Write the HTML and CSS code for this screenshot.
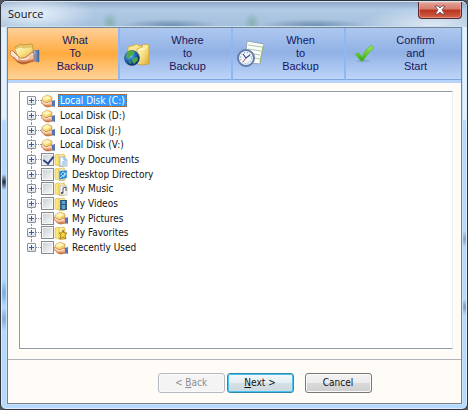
FILE: index.html
```html
<!DOCTYPE html>
<html lang="en">
<head>
<meta charset="utf-8">
<title>Source</title>
<link rel="stylesheet" href="styles.css">
</head>
<body>
<svg class="defs" aria-hidden="true">
  <defs>
    <linearGradient id="gold" x1="0" y1="0" x2="1" y2="1"><stop offset="0" stop-color="#fffbd0"/><stop offset=".5" stop-color="#f8df80"/><stop offset="1" stop-color="#dca733"/></linearGradient>
    <linearGradient id="skin" x1="0" y1="0" x2="0" y2="1"><stop offset="0" stop-color="#ffe4cd"/><stop offset=".6" stop-color="#f5b58c"/><stop offset="1" stop-color="#b8632f"/></linearGradient>
    <linearGradient id="cuff" x1="0" y1="0" x2="1" y2="0"><stop offset="0" stop-color="#e4eefb"/><stop offset=".4" stop-color="#7e9bcb"/><stop offset="1" stop-color="#3e5c94"/></linearGradient>
    <radialGradient id="sea" cx=".35" cy=".3" r=".75"><stop offset="0" stop-color="#8fd4f8"/><stop offset=".45" stop-color="#2472c4"/><stop offset="1" stop-color="#0a2467"/></radialGradient>
    <linearGradient id="leaf" x1="0" y1="0" x2="0" y2="1"><stop offset="0" stop-color="#a4e860"/><stop offset="1" stop-color="#32ac10"/></linearGradient>
  </defs>
  <symbol id="hand" viewBox="0 0 30 24">
    <path d="M5 5l6-3 2 1 9-1 2 9-16 4z" fill="#e9c667" stroke="#b88d38" stroke-width=".7"/>
    <path d="M5 7l6-2 2 1 9-1 1 8-14 4z" fill="url(#gold)" stroke="#d9b660" stroke-width=".6"/>
    <path d="M0 10c1-2 3-1 4 0l5 5c2 2 5 1 7 0l5-4 3-1v9c-5 1-7 3-12 3-4-1-7-4-9-7-2-1-3-3-3-5z" fill="url(#skin)" stroke="#ae6038" stroke-width=".8"/>
    <path d="M2 10l6 6M1 12l7 6M10 17c4 1 7 0 9-2" fill="none" stroke="#fff4e8" stroke-width="1.1"/>
    <path d="M4 15c3 4 6 6 9 6 4 0 6-2 10-3" fill="none" stroke="#a84e22" stroke-width=".7"/>
    <path d="M23 9l6-1v12l-5-1c2-3 0-7-1-10z" fill="url(#cuff)" stroke="#597095" stroke-width=".6"/>
  </symbol>
  <symbol id="minihand" viewBox="0 0 14 14">
    <path d="M1 4l5-3 5 2v5l-4 2-5-3z" fill="url(#gold)" stroke="#cf9546" stroke-width=".6"/>
    <path d="M2 4l4-2 4 2-4 2z" fill="#fff4ba"/>
    <path d="M0 6l5 3 6-2 1 5-5 1c-3 0-5-2-7-5z" fill="url(#skin)" stroke="#ba6b36" stroke-width=".7"/>
    <path d="M1 7l4 3 5-2" fill="none" stroke="#fff1d6" stroke-width=".9"/>
    <path d="M11 7l3-1v7l-3-1z" fill="#5775b5"/>
  </symbol>
  <symbol id="folder" viewBox="0 0 14 14">
    <path d="M1 2l3-1 2 1v11l-5-1z" fill="#fbe778" stroke="#dcb64b" stroke-width=".6"/>
    <path d="M5 2l5-1 1 2v10l-5 1-1-1z" fill="url(#gold)" stroke="#d4ab42" stroke-width=".6"/>
  </symbol>
  <symbol id="docs" viewBox="0 0 14 14"><use href="#folder"/><path d="M6 4h4l3 3v6H6z" fill="#f4faff" stroke="#7ea6cd" stroke-width=".7"/><path d="M10 4v3h3M8 9h4M8 11h4" fill="none" stroke="#5b97d1" stroke-width=".8"/></symbol>
  <symbol id="desktop" viewBox="0 0 14 14"><use href="#folder"/><path d="M5 4l8-1v8l-8 2z" fill="#1f82d0" stroke="#bddcf4" stroke-width=".7"/><path d="M7 8c0-4 5-3 4 0-1 3-3 1-2 0M6 11l6-5" fill="none" stroke="#d4f1ff"/></symbol>
  <symbol id="music" viewBox="0 0 14 14"><use href="#folder"/><path d="M6 4h7v9H6z" fill="#f3f4f5" stroke="#b2b6bc" stroke-width=".6"/><path d="M9 11V6l3-1v4" fill="none" stroke="#333" stroke-width=".8"/><circle cx="8" cy="11" r="1" fill="#333"/></symbol>
  <symbol id="video" viewBox="0 0 14 14"><use href="#folder"/><path d="M6 3h7v10H6z" fill="#34516f"/><path d="M8 4h3v3H8zM8 8h3v4H8z" fill="#59a6d4"/><path d="M7 4v9M12 4v9" stroke="#9bb1c3" stroke-width=".6" stroke-dasharray="1 1"/></symbol>
  <symbol id="star" viewBox="0 0 14 14"><use href="#folder"/><path d="M9 4l1 3h3l-2 2 1 4-3-2-3 2 1-4-2-2h3z" fill="#ffd735" stroke="#8c6c18" stroke-width=".8"/></symbol>
  <symbol id="globe" viewBox="0 0 28 28">
    <path d="M4 7l9-3 2 2 3-1v18l-14 2z" fill="#f8e58f" stroke="#c99d37" stroke-width=".7"/>
    <path d="M13 9l5-2 1-3 6 1v19l-7 1-5-1z" fill="url(#gold)" stroke="#c69a38" stroke-width=".7"/>
    <path d="M14 10l6-1 4-4" fill="none" stroke="#fffbd4"/>
    <circle cx="8" cy="18" r="7.5" fill="url(#sea)" stroke="#204582" stroke-width=".6"/>
    <path d="M3 13c2-3 5-3 8-1l-2 3-3 1-1 3-3-2zM9 18l4-1 1 3-4 4-2-3zM4 21l3 1v2z" fill="#4caa43"/>
  </symbol>
  <symbol id="clock" viewBox="0 0 28 28">
    <path d="M10 1l17 3-4 20-15-2z" fill="#f9fcf5" stroke="#8c9ba6" stroke-width=".8"/>
    <path d="M11 5l14 2M11 9l13 2M11 13l12 2M13 17l10 2" stroke="#9db4a6" stroke-width=".8"/><path d="M23 22l3-16" stroke="#9bbc6e"/>
    <circle cx="9" cy="18" r="8" fill="#f0f5fc" stroke="#637ba9" stroke-width="2"/>
    <circle cx="9" cy="18" r="5.5" fill="none" stroke="#7788a8" stroke-dasharray="1 1.9"/>
    <path d="M6 14l3 4 4-3" fill="none" stroke="#354b7a" stroke-width="1.1"/><path d="M9 18l-3 4" stroke="#d04e4e"/>
  </symbol>
  <symbol id="tick" viewBox="0 0 20 20"><ellipse cx="9" cy="17" rx="7" ry="1.5" fill="#6284b0" opacity=".3"/><path d="M1 10l4-1 3 4c2-5 5-9 10-12l1 4c-4 3-7 7-10 12H7z" fill="url(#leaf)" stroke="#51b82b" stroke-width=".6"/></symbol>
</svg>
<main class="window">
  <header class="titlebar">
    <h1>Source</h1>
    <button class="close" type="button" aria-label="Close"><svg viewBox="0 0 12 10"><path d="M1 1h3l2 2 2-2h3L8 5l3 4H8L6 7 4 9H1l3-4z" fill="#fff" stroke="#68394a" stroke-width=".8"/></svg></button>
  </header>
  <div class="client">
    <nav class="steps" aria-label="Backup steps">
      <button class="step current" type="button" aria-current="step"><svg class="art-hand"><use href="#hand"/></svg><span>What<br>To<br>Backup</span></button>
      <button class="step" type="button"><svg class="art"><use href="#globe"/></svg><span>Where<br>to<br>Backup</span></button>
      <button class="step" type="button"><svg class="art"><use href="#clock"/></svg><span>When<br>to<br>Backup</span></button>
      <button class="step" type="button"><svg class="art-tick"><use href="#tick"/></svg><span>Confirm<br>and<br>Start</span></button>
    </nav>
    <section class="content">
      <ul class="tree">
        <li><button class="expand" type="button" aria-label="Expand C"></button><svg class="icon"><use href="#minihand"/></svg><span class="name selected">Local Disk (C:)</span></li>
        <li><button class="expand" type="button" aria-label="Expand D"></button><svg class="icon"><use href="#minihand"/></svg><span class="name">Local Disk (D:)</span></li>
        <li><button class="expand" type="button" aria-label="Expand J"></button><svg class="icon"><use href="#minihand"/></svg><span class="name">Local Disk (J:)</span></li>
        <li><button class="expand" type="button" aria-label="Expand V"></button><svg class="icon"><use href="#minihand"/></svg><span class="name">Local Disk (V:)</span></li>
        <li><button class="expand" type="button" aria-label="Expand My Documents"></button><input type="checkbox" id="c1" checked><svg class="icon"><use href="#docs"/></svg><label class="name" for="c1">My Documents</label></li>
        <li><button class="expand" type="button" aria-label="Expand Desktop Directory"></button><input type="checkbox" id="c2"><svg class="icon"><use href="#desktop"/></svg><label class="name" for="c2">Desktop Directory</label></li>
        <li><button class="expand" type="button" aria-label="Expand My Music"></button><input type="checkbox" id="c3"><svg class="icon"><use href="#music"/></svg><label class="name" for="c3">My Music</label></li>
        <li><button class="expand" type="button" aria-label="Expand My Videos"></button><input type="checkbox" id="c4"><svg class="icon"><use href="#video"/></svg><label class="name" for="c4">My Videos</label></li>
        <li><button class="expand" type="button" aria-label="Expand My Pictures"></button><input type="checkbox" id="c5"><svg class="icon"><use href="#minihand"/></svg><label class="name" for="c5">My Pictures</label></li>
        <li><button class="expand" type="button" aria-label="Expand My Favorites"></button><input type="checkbox" id="c6"><svg class="icon"><use href="#star"/></svg><label class="name" for="c6">My Favorites</label></li>
        <li><button class="expand" type="button" aria-label="Expand Recently Used"></button><input type="checkbox" id="c7"><svg class="icon"><use href="#minihand"/></svg><label class="name" for="c7">Recently Used</label></li>
      </ul>
    </section>
    <footer class="actions">
      <button class="btn" type="button" disabled>&lt; <u>B</u>ack</button>
      <button class="btn primary" type="button"><u>N</u>ext &gt;</button>
      <button class="btn cancel" type="button">Cancel</button>
    </footer>
  </div>
</main>
</body>
</html>
```
FILE: styles.css
```css
* { box-sizing: border-box; }
body { margin: 0; background: #53575d; font-family: "DejaVu Sans Condensed", "DejaVu Sans", sans-serif; font-size: 10px; color: #111; }
button { font: inherit; color: inherit; margin: 0; padding: 0; }
.defs { position: absolute; width: 0; height: 0; }

.window {
  display: flex; flex-direction: column; min-height: 100vh;
  padding: 0 5px 5px 6px; border: 1px solid #30343d; border-radius: 7px 7px 6px 6px;
  box-shadow: inset 0 0 0 1px #dcecfb;
  background:
    radial-gradient(ellipse 5px 8px at 3px 181px, #182336, transparent),
    radial-gradient(ellipse 6px 14px at 3px 292px, #79a9dc, transparent),
    radial-gradient(ellipse 6px 12px at 3px 318px, #86a7cf, transparent),
    radial-gradient(ellipse 5px 8px at 464px 238px, #829ebd, transparent),
    radial-gradient(ellipse 5px 8px at 464px 306px, #7895b9, transparent),
    linear-gradient(#e3effb 0 118px, #b5daff 120px);
}
.titlebar {
  display: flex; justify-content: space-between; align-items: flex-start;
  height: 26px; margin: 0 -5px 0 -6px; padding: 0 5px 0 7px; border-radius: 6px 6px 0 0;
  border-top: 1px solid #d7e6f3;
  background:
    radial-gradient(ellipse 8px 11px at 109px 21px, #75aa9caa, transparent),
    radial-gradient(ellipse 8px 11px at 251px 21px, #75aa9caa, transparent),
    radial-gradient(ellipse 48px 6px at 169px 23px, #587b9daa, transparent),
    radial-gradient(ellipse 52px 6px at 312px 23px, #587b9daa, transparent),
    radial-gradient(ellipse 60px 20px at 34px 12px, #e6f0f9, transparent),
    radial-gradient(ellipse 70px 20px at 430px 24px, #dfeaf4, transparent),
    linear-gradient(#91a9c7, #b0cae5 30%, #a4bfdb);
}
.titlebar h1 { margin: 0; padding-top: 4px; font: 11px/16px "Open Sans", sans-serif; color: #111; }
.close {
  display: grid; place-items: center; width: 44px; height: 17px;
  border: 1px solid #5b2733; border-top: 0; border-radius: 0 0 4px 4px;
  background: linear-gradient(#e5a59a, #d3796b 45%, #b93220 50%, #d26349);
  box-shadow: inset 0 0 0 1px #f1bbb080;
}
.close svg { width: 12px; height: 10px; }

.client { flex: 1; display: flex; flex-direction: column; border: 1px solid #77838f; background: #fffcf8; box-shadow: 0 0 0 1px #c9e1f5; }
.steps { display: grid; grid-template-columns: 110px 113px 113px 1fr; border-bottom: 3px solid #b8d4fd; }
.step {
  display: flex; align-items: center; height: 52px; padding: 0 8px 0 4px;
  border: 0; border-left: 2px solid #8db8f4; border-bottom: 1px solid #80a6df;
  background: linear-gradient(#adc8f0, #91b1e5 48%, #bdd5f8);
  font: 11px/13px "Liberation Sans", Arial, sans-serif; color: #171660;
}
.step.current { padding-left: 2px; border-left: 0; border-bottom-color: #e5a15c; background: linear-gradient(#ffd09a, #ffab3f 50%, #ffd39a); }
.step span { flex: 1; }
.step svg { flex: none; }
.art-hand { width: 30px; height: 24px; }
.art { width: 28px; height: 28px; }
.art-tick { width: 20px; height: 20px; margin: 0 4px; }

.content { flex: 1; display: flex; padding: 8px 8px 10px 11px; }
.tree {
  flex: 1; margin: 0; padding: 1px 0 0 7px; list-style: none;
  border: 1px solid #929aa4; border-right-color: #eceff2; background: #fff;
  display: grid; grid-template-rows: repeat(4, 15px 15px 14px); align-content: start;
}
.tree li { position: relative; display: flex; align-items: center; min-width: 0; }
.tree li::before { content: ""; position: absolute; left: 4px; top: 0; bottom: 0; border-left: 1px dotted #8b919a; }
.tree li:first-child::before { top: 7px; }
.tree li:last-child::before { bottom: 7px; }
.expand {
  position: relative; flex: none; width: 9px; height: 9px; margin-right: 5px;
  border: 1px solid #8b929b; border-radius: 1px;
  background: linear-gradient(#315fa9, #315fa9) center / 5px 1px no-repeat, linear-gradient(#315fa9, #315fa9) center / 1px 5px no-repeat, linear-gradient(#fff, #dce0e4);
}
.expand::after { content: ""; position: absolute; left: 8px; top: 3px; width: 5px; border-top: 1px dotted #8b919a; }
.icon { flex: none; width: 14px; height: 14px; }
.name { padding: 0 2px; margin-left: 3px; line-height: 13px; white-space: nowrap; }
.tree label { margin-left: 2px; }
.selected { background: #3399ff; color: #fff; outline: 1px dotted #9c5a25; outline-offset: -1px; }
.tree input {
  appearance: none; flex: none; width: 13px; height: 13px; margin: 0;
  border: 1px solid #858b91; background: linear-gradient(135deg, #c9ced3, #fafafa) padding-box; box-shadow: inset 0 0 0 1px #f5f5f5;
}
.tree input:checked::after { content: ""; display: block; width: 5px; height: 8px; margin: 0 0 0 3px; border: solid #304787; border-width: 0 2px 2px 0; transform: rotate(38deg); }

.actions { display: flex; align-items: flex-start; justify-content: center; gap: 2px; height: 44px; padding: 13px 0 0 60px; border-top: 1px solid #b1b5b9; }
.btn { width: 67px; height: 20px; border: 1px solid #777; border-radius: 3px; background: linear-gradient(#f3f3f3, #ebebeb 49%, #dadada 51%, #cfcfcf); box-shadow: inset 0 0 0 1px #fafafa; line-height: 16px; }
.btn:disabled { color: #8b8e91; border-color: #b5babe; background: #f4f4f4; }
.primary { border-color: #3586ac; box-shadow: inset 0 0 0 1px #45c5ef; background: linear-gradient(#f2f7fa, #e5eef2 49%, #d4e0e6 51%, #ccd9df); }
.cancel { margin-left: 9px; }
```
